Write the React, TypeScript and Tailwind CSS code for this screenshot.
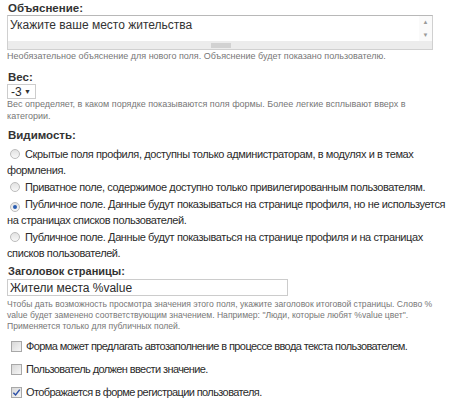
import React from "react";

const font = { fontFamily: '"Liberation Sans", Arial, sans-serif' };

function Radio({ checked }: { checked?: boolean }) {
  return (
    <span className="inline-flex size-[10px] shrink-0 items-center justify-center rounded-full border border-[#bcbcbc] bg-gradient-to-b from-[#e2e2e2] to-[#f8f8f8]">
      {checked && <span className="size-[4px] rounded-full bg-[#2a5db0]" />}
    </span>
  );
}

function Checkbox({ checked }: { checked?: boolean }) {
  return (
    <span className="inline-flex size-[11px] shrink-0 items-center justify-center border border-[#a8a8a8] bg-gradient-to-br from-[#d8d8d8] to-[#f6f6f6]">
      {checked && (
        <svg viewBox="0 0 10 10" className="size-[9px]">
          <path d="M1.5 5.2 L4 7.8 L8.6 1.8" fill="none" stroke="#2b4fa8" strokeWidth="1.6" />
        </svg>
      )}
    </span>
  );
}

export default function App() {
  const radios: React.ReactNode[] = [
    <>Скрытые поля профиля, доступны только администраторам, в модулях и в темах<br />формления.</>,
    <>Приватное поле, содержимое доступно только привилегированным пользователям.</>,
    <>Публичное поле. Данные будут показываться на странице профиля, но не используется<br />на страницах списков пользователей.</>,
    <>Публичное поле. Данные будут показываться на странице профиля и на страницах<br />списков пользователей.</>,
  ];
  const checks = [
    ["Форма может предлагать автозаполнение в процессе ввода текста пользователем.", false],
    ["Пользователь должен ввести значение.", false],
    ["Отображается в форме регистрации пользователя.", true],
  ] as const;

  return (
    <div className="h-[399px] w-[450px] overflow-hidden bg-white px-[7px] text-[#2b2b2b]" style={font}>
      {/* Объяснение */}
      <div className="pt-[2px]">
        <div className="pl-[1px] text-[11.5px] font-bold leading-[13px] text-[#333]">Объяснение:</div>
        <div className="flex h-[35px] w-[426px] border border-[#d0d0d0] border-t-[#b8b8b8]">
          <div className="flex flex-1 flex-col">
            <div className="flex-1 whitespace-nowrap px-[2px] pt-[2px] text-[12px] leading-[14px] text-[#333]">
              Укажите ваше место жительства
            </div>
            <div className="flex h-[8px] items-center bg-[#ececec]">
              <div className="ml-[203px] h-[5px] w-[20px] bg-[#d2d2d2]" />
            </div>
          </div>
          <div className="flex w-[13px] flex-col">
            <div className="flex flex-1 flex-col items-center justify-between bg-[#fafafa] py-[3px] text-[6px] leading-[6px] text-[#999]">
              <span>▲</span>
              <span>▼</span>
            </div>
            <div className="h-[8px] bg-[#ececec]" />
          </div>
        </div>
        <div className="mt-[1px] whitespace-nowrap text-[9px] leading-[11px] text-[#777]">
          Необязательное объяснение для нового поля. Объяснение будет показано пользователю.
        </div>
      </div>

      {/* Вес */}
      <div className="mt-[9px]">
        <div className="pl-[1px] text-[11.5px] font-bold leading-[13px] text-[#333]">Вес:</div>
        <div className="flex h-[15px] w-[29px] items-center justify-between border border-[#ccc] bg-white pl-[3px] pr-[4px] text-[12px] leading-[14px]">
          <span>-3</span>
          <span className="text-[7px] text-[#333]">▼</span>
        </div>
        <div className="mt-[-1px] whitespace-nowrap text-[9px] leading-[12px] text-[#777]">
          Вес определяет, в каком порядке показываются поля формы. Более легкие всплывают вверх в
          <br />
          категории.
        </div>
      </div>

      {/* Видимость */}
      <div className="mt-[7px]">
        <div className="pl-[1px] text-[11.5px] font-bold leading-[13px] text-[#333]">Видимость:</div>
        <div className="mt-[4px] flex flex-col gap-[1px]">
          {radios.map((r, i) => (
            <div key={i} className="whitespace-nowrap text-[11px] leading-[16px] tracking-[-0.4px]">
              <span className="ml-[3px] mr-[5px] inline-flex align-[-1px]">
                <Radio checked={i === 2} />
              </span>
              {r}
            </div>
          ))}
        </div>
      </div>

      {/* Заголовок страницы */}
      <div className="mt-[4px]">
        <div className="pl-[1px] text-[11px] font-bold leading-[13px] text-[#333]">Заголовок страницы:</div>
        <div className="mt-[1px] flex h-[17px] w-[281px] items-center border border-[#ccc] px-[2px] text-[12px] leading-[14px]">
          Жители места %value
        </div>
        <div className="mt-[3px] whitespace-nowrap text-[8.6px] leading-[11px] text-[#777]">
          Чтобы дать возможность просмотра значения этого поля, укажите заголовок итоговой страницы. Слово %
          <br />
          value будет заменено соответствующим значением. Например: "Люди, которые любят %value цвет".
          <br />
          Применяется только для публичных полей.
        </div>
      </div>

      {/* Чекбоксы */}
      <div className="mt-[7px] flex flex-col gap-[9px]">
        {checks.map(([label, c], i) => (
          <div key={i} className="flex items-center gap-[4px] pl-[4px] text-[11px] leading-[14px] tracking-[-0.6px]">
            <Checkbox checked={c} />
            <span className="whitespace-nowrap">{label}</span>
          </div>
        ))}
      </div>
    </div>
  );
}
